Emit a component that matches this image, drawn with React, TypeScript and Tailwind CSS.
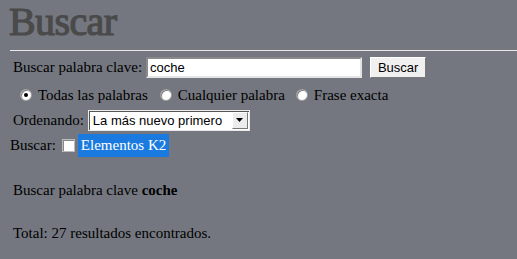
import React from "react";

function Radio({ checked }: { checked?: boolean }) {
  return (
    <span className="relative inline-block w-[12px] h-[12px] rounded-full bg-white border border-[#9a9a9a] shadow-[inset_1px_1px_0_#808080]">
      {checked && <span className="absolute left-[3px] top-[3px] w-[4px] h-[4px] rounded-full bg-black" />}
    </span>
  );
}

export default function App() {
  return (
    <div className="w-[517px] h-[259px] bg-[#74777f] overflow-hidden text-[15px] text-black" style={{ fontFamily: '"Liberation Serif", serif' }}>
      <div className="pl-[9px] h-[50px] text-[40px] leading-[44px] tracking-[-0.6px] text-[#4a4a4a] [-webkit-text-stroke:1.2px_#4a4a4a]">
        Buscar
      </div>
      <div className="ml-[10px] h-[1px] bg-[#e8e8e8]" />
      <div className="flex items-center h-[21px] mt-[6px] pl-[13px]">
        <span>Buscar palabra clave:</span>
        <div className="ml-[4px] w-[216px] h-[21px] bg-white border-2 border-t-[#8a8a8a] border-l-[#8a8a8a] border-r-[#e4e4e4] border-b-[#e4e4e4] flex items-center pl-[2px] text-[13px]" style={{ fontFamily: '"Liberation Sans", sans-serif' }}>
          coche
        </div>
        <div className="ml-[8px] w-[56px] h-[21px] bg-[#f0f0f0] border border-t-white border-l-white border-r-[#777] border-b-[#777] flex items-center justify-center text-[13px]" style={{ fontFamily: '"Liberation Sans", sans-serif' }}>
          Buscar
        </div>
      </div>
      <div className="flex items-center h-[22px] mt-[6px] pl-[20px]">
        <Radio checked />
        <span className="ml-[6px]">Todas las palabras</span>
        <span className="ml-[12px] flex"><Radio /></span>
        <span className="ml-[6px]">Cualquier palabra</span>
        <span className="ml-[11px] flex"><Radio /></span>
        <span className="ml-[6px]">Frase exacta</span>
      </div>
      <div className="flex items-center h-[21px] mt-[4px] pl-[13px]">
        <span>Ordenando:</span>
        <div className="ml-[4px] w-[162px] h-[21px] bg-white border border-[#eaeaea] shadow-[inset_1px_1px_0_#555] flex items-center justify-between text-[13px]" style={{ fontFamily: '"Liberation Sans", sans-serif' }}>
          <span className="pl-[4px]">La más nuevo primero</span>
          <span className="w-[16px] h-[17px] mr-[1px] bg-[#ececec] border border-t-white border-l-white border-r-[#777] border-b-[#777] flex items-center justify-center">
            <svg width="8" height="5" viewBox="0 0 8 5"><path d="M0 0h7L3.5 4z" fill="#000" /></svg>
          </span>
        </div>
      </div>
      <div className="flex items-center h-[23px] mt-[3px] pl-[10px]">
        <span>Buscar:</span>
        <span className="ml-[6px] w-[13px] h-[13px] bg-white border border-[#bbb] shadow-[inset_1px_1px_0_#888]" />
        <span className="ml-[3px] h-[23px] px-[3px] flex items-center bg-[#1a7ae0] text-white">Elementos K2</span>
      </div>
      <div className="pl-[13px] mt-[25px] leading-[17px]">
        Buscar palabra clave <b>coche</b>
      </div>
      <div className="pl-[13px] mt-[26px] leading-[17px]">Total: 27 resultados encontrados.</div>
    </div>
  );
}
